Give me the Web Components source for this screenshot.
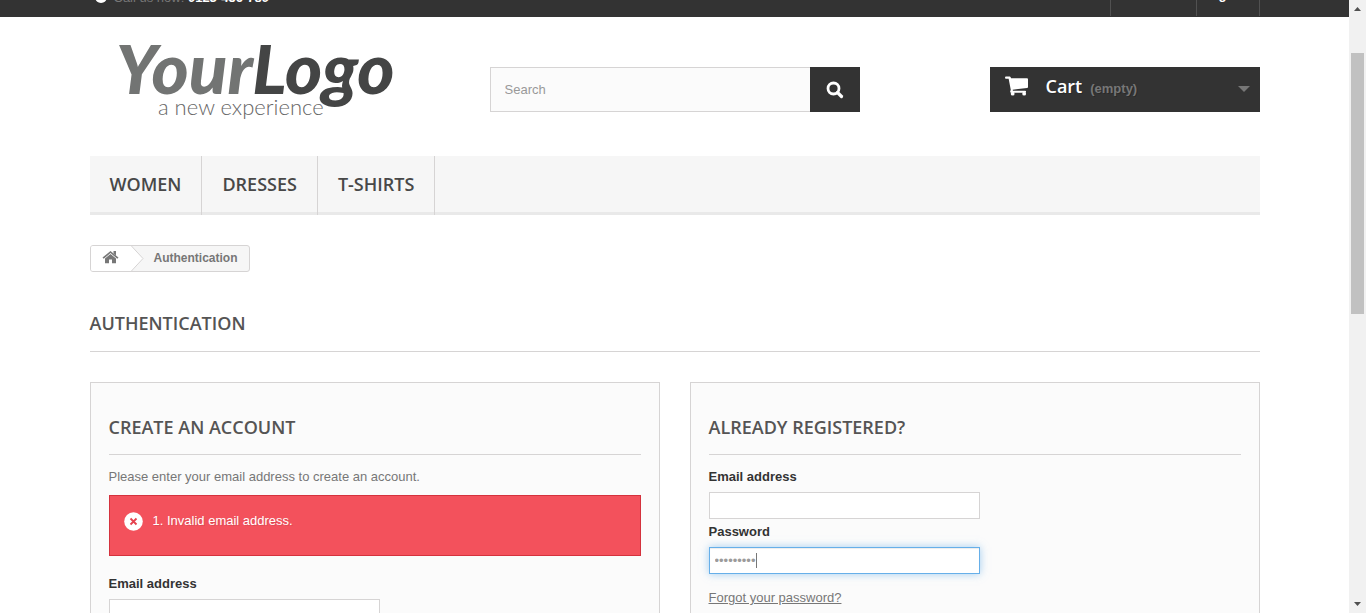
<!DOCTYPE html>
<html lang="en">
<head>
<meta charset="utf-8">
<meta name="viewport" content="width=device-width, initial-scale=1">
<title>Authentication - My Store</title>
<style>
  html, body { margin: 0; height: 100%; }
  body { background: #fff; color: #777; font: 13px/18px "Liberation Sans", Arial, sans-serif; overflow: hidden; }
</style>
</head>
<body>
<store-shell>
  <store-topbar slot="top"></store-topbar>
  <store-header></store-header>
  <store-menu></store-menu>
  <bread-crumb>Authentication</bread-crumb>
  <page-heading>Authentication</page-heading>
  <card-columns>
    <form-card heading="Create an account">
      <p style="margin:0 0 9px">Please enter your email address to create an account.</p>
      <error-alert>Invalid email address.</error-alert>
      <form-field label="Email address" type="email"></form-field>
    </form-card>
    <form-card heading="Already registered?">
      <form-field label="Email address" type="email"></form-field>
      <form-field label="Password" type="password" value="secret123" active></form-field>
      <forgot-link></forgot-link>
    </form-card>
  </card-columns>
</store-shell>

<script>
const define = (name, html, setup) => {
  const template = document.createElement('template');
  template.innerHTML = html;
  customElements.define(name, class extends HTMLElement {
    constructor() {
      super();
      this.attachShadow({ mode: 'open' }).append(template.content.cloneNode(true));
    }
    connectedCallback() { if (setup) setup(this, this.shadowRoot); }
  });
};

define('scroll-rail', `
<style>
  :host { display: flex; flex-direction: column; align-items: center; background: #f1f1f1; }
  svg { display: block; width: 17px; height: 17px; fill: #505050; }
  .track { flex: 1; width: 13px; padding-top: 36px; box-sizing: border-box; }
  .thumb { height: 48%; background: #c1c1c1; }
</style>
<svg viewBox="0 0 17 17" aria-hidden="true"><path d="M5 11h7L8.500 7z"/></svg>
<div class="track"><div class="thumb"></div></div>
<svg viewBox="0 0 17 17" aria-hidden="true"><path d="M5 6h7L8.500 10z"/></svg>`);

define('store-shell', `
<style>
  :host { display: grid; grid-template-columns: minmax(0, 1fr) 17px; height: 100vh; overflow: hidden; }
  main { overflow: hidden; }
  .container { max-width: 1170px; margin: 0 auto; }
</style>
<main><slot name="top"></slot><div class="container"><slot></slot></div></main>
<scroll-rail></scroll-rail>`);

define('store-topbar', `
<style>
  :host { display: block; background: #333; color: #777; }
  .row { display: flex; align-items: flex-end; justify-content: space-between; max-width: 1170px; height: 17px; margin: 0 auto; overflow: hidden; }
  .phone { display: flex; align-items: center; gap: 7px; padding: 0 5px 10px; }
  b { color: #fff; }
  svg { display: block; width: 12px; height: 14px; }
  nav { display: flex; border-right: 1px solid #515151; height: 34px; margin-bottom: 1px; font-weight: bold; }
  a { display: block; border-left: 1px solid #515151; padding: 4px 9px 0; color: #fff; text-decoration: none; }
  a.hover { color: #222; }
</style>
<div class="row">
  <div class="phone">
    <svg viewBox="0 0 12 14" aria-hidden="true"><circle cx="6" cy="6" r="6" fill="#fff"/></svg>
    <span>Call us now: <b>0123-456-789</b></span>
  </div>
  <nav><a class="hover" href="#contact">Contact us</a><a href="#login">Sign in</a></nav>
</div>`);

define('store-logo', `
<style>
  :host { display: block; }
  a { display: block; }
  svg { display: block; width: 100%; max-width: 350px; }
</style>
<a href="#home" aria-label="Home">
<svg viewBox="0 0 350 99">
  <g font-family="Lato, sans-serif">
    <text x="25" y="49" font-size="71" font-weight="900" font-style="italic" fill="#727473">Your<tspan fill="#444545">Logo</tspan></text>
    <text x="68" y="70" font-size="22" font-weight="300" fill="#666">a new experience</text>
  </g>
</svg></a>`);

define('search-box', `
<style>
  :host { display: block; }
  form { display: flex; height: 45px; }
  input { flex: 1; min-width: 0; box-sizing: border-box; border: 1px solid #d6d4d4; border-right: 0; border-radius: 0; background: #fbfbfb; padding: 0 14px; font: inherit; color: #686666; outline: 0; }
  input::placeholder { color: #999; opacity: 1; }
  button { width: 50px; border: 0; padding: 0; background: #333; display: grid; place-items: center; }
  svg { width: 18px; height: 18px; }
</style>
<form><input type="text" placeholder="Search" aria-label="Search"><button type="button" aria-label="Search">
<svg viewBox="0 0 18 18" fill="none" stroke="#fff"><circle cx="7.500" cy="7.500" r="5.500" stroke-width="2.800"/><path d="M11.500 11.500l4 4" stroke-width="3.200" stroke-linecap="round"/></svg></button></form>`);

define('cart-box', `
<style>
  :host { display: block; }
  a { display: flex; align-items: center; height: 45px; box-sizing: border-box; padding: 0 10px 8px 15px; background: #333; color: #777; font-weight: bold; text-decoration: none; text-shadow: 1px 1px rgba(0,0,0,.2); }
  .cart { width: 23px; height: 20px; margin-right: 18px; }
  b { font: 600 18px/22px "Open Sans", sans-serif; color: #fff; margin-right: 8px; }
  span { flex: 1; padding-top: 6px; }
  .arrow { width: 12px; height: 6px; margin-top: 6px; }
</style>
<a href="#cart">
  <svg class="cart" viewBox="0 0 24 20" fill="#fff" aria-hidden="true"><path d="M1 0h4q1 0 1.300 2H23q1 0 1 1v8q0 1-1 1L8 13.800l.3 1.200H21q1 0 1 1t-1 1H6.500q-1.500 0-1-1.500L6 14 3.800 2.500H1q-1 0-1-1.200T1 0z"/><circle cx="8" cy="18" r="2"/><circle cx="20" cy="18" r="2"/></svg>
  <b>Cart</b><span>(empty)</span>
  <svg class="arrow" viewBox="0 0 12 6" fill="#777" aria-hidden="true"><path d="M0 0h12L6 6z"/></svg>
</a>`);

define('store-header', `
<style>
  :host { display: grid; grid-template-columns: repeat(3, minmax(0, 1fr)); gap: 30px; height: 99px; padding: 28px 0 12px; align-items: start; }
  search-box { margin-top: 22px; }
  cart-box { margin: 22px 0 0 100px; }
</style>
<store-logo></store-logo><search-box></search-box><cart-box></cart-box>`);

define('store-menu', `
<style>
  :host { display: block; }
  ul { display: flex; list-style: none; margin: 0; padding: 0; background: linear-gradient(#f6f6f6 0 56px, #e9e9e9 56px); }
  li { border-right: 1px solid #d6d4d4; }
  a { display: block; padding: 17px 20px 20px; font: 600 18px/22px "Open Sans", sans-serif; color: #484848; text-transform: uppercase; text-decoration: none; }
</style>
<nav><ul><li><a href="#women">Women</a></li><li><a href="#dresses">Dresses</a></li><li><a href="#t-shirts">T-shirts</a></li></ul></nav>`);

define('bread-crumb', `
<style>
  :host { display: block; padding-top: 30px; }
  nav { display: inline-flex; align-items: stretch; height: 25px; border: 1px solid #d6d4d4; border-radius: 3px; background: #f6f6f6; overflow: hidden; font: bold 12px/24px "Liberation Sans", Arial, sans-serif; vertical-align: top; }
  a { display: flex; width: 53px; }
  span { padding: 0 11px 0 10px; }
  svg { display: block; width: 53px; height: 25px; }
</style>
<nav aria-label="Breadcrumb"><a href="#home" aria-label="Home">
<svg viewBox="0 0 53 25"><path d="M-1-1H39.500L52 12.500 39.500 26H-1z" fill="#fff" stroke="#d6d4d4"/><g fill="#777"><path d="M11.500 11.600L19.500 5l8 6.600-1.200 1.200-6.800-5.700-6.800 5.700z"/><path d="M14 12.500l5.500-4.500 5.500 4.500v4.800h-4V13.500h-3v3.800h-4zM22.500 5H25v4.500l-2.500-2z"/></g></svg></a>
<span><slot></slot></span></nav>`);

define('page-heading', `
<style>
  :host { display: block; padding-top: 40px; }
  h1 { margin: 0 0 30px; padding-bottom: 17px; border-bottom: 1px solid #d6d4d4; font: 600 18px/22px "Open Sans", sans-serif; color: #555454; text-transform: uppercase; }
</style>
<h1><slot></slot></h1>`);

define('card-columns', `
<style>:host { display: grid; grid-template-columns: repeat(2, minmax(0, 1fr)); gap: 30px; }</style><slot></slot>`);

define('form-card', `
<style>
  :host { display: block; box-sizing: border-box; padding: 33px 18px 60px; border: 1px solid #d6d4d4; background: #fbfbfb; }
  h2 { margin: 0 0 13px; padding-bottom: 16px; border-bottom: 1px solid #d6d4d4; font: 600 18px/22px "Open Sans", sans-serif; color: #555454; text-transform: uppercase; }
</style>
<h2></h2><slot></slot>`, (host, root) => {
  root.querySelector('h2').textContent = host.getAttribute('heading');
});

define('error-alert', `
<style>
  :host { display: flex; align-items: flex-start; gap: 10px; margin-bottom: 19px; padding: 16px 14px; min-height: 27px; border: 1px solid #d4323d; background: #f3515c; color: #fff; text-shadow: 1px 1px rgba(0,0,0,.1); }
  svg { width: 19px; height: 19px; }
  ol { margin: 0; padding: 0; list-style: none; }
</style>
<svg viewBox="0 0 19 19" aria-hidden="true"><circle cx="9.500" cy="9.500" r="9.300" fill="#fff"/><path d="M6.500 6.500l6 6m0-6l-6 6" stroke="#e5424e" stroke-width="1.800"/></svg>
<ol role="alert"><li>1. <slot></slot></li></ol>`);

define('form-field', `
<style>
  :host { display: block; margin-bottom: 4px; }
  label { display: block; margin-bottom: 6px; font-weight: bold; color: #333; }
  .control { position: relative; max-width: 271px; }
  input { display: block; width: 100%; height: 27px; box-sizing: border-box; border: 1px solid #d6d4d4; border-radius: 0; background: #fff; padding: 3px 5px; font: inherit; color: #9c9b9b; outline: 0; }
  .caret { display: none; position: absolute; left: 47px; top: 6px; width: 1px; height: 15px; background: #777; }
  :host([active]) input { border-color: #66afe9; box-shadow: inset 0 1px 1px rgba(0,0,0,.075), 0 0 8px rgba(102,175,233,.6); }
  :host([active]) .caret { display: block; }
</style>
<label for="control"></label><div class="control"><input id="control"><i class="caret"></i></div>`, (host, root) => {
  root.querySelector('label').textContent = host.getAttribute('label');
  const input = root.querySelector('input');
  input.type = host.getAttribute('type') || 'text';
  input.value = host.getAttribute('value') || '';
});

define('forgot-link', `
<style>:host { display: block; padding-top: 11px; } a { color: #777; text-decoration: underline; }</style>
<a href="#password">Forgot your password?</a>`);
</script>
</body>
</html>
